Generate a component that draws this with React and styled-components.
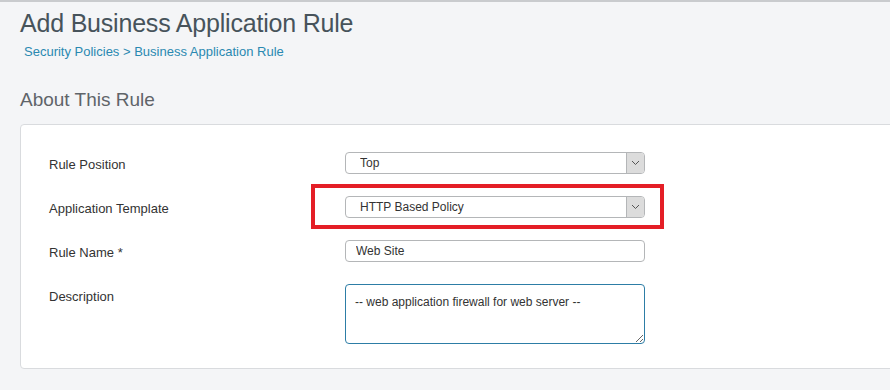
import React from "react";
import styled, { createGlobalStyle } from "styled-components";

const GlobalStyle = createGlobalStyle`
  html, body {
    margin: 0;
    padding: 0;
    background: #f4f5f7;
    overflow: hidden;
  }
  body {
    font-family: "Liberation Sans", Arial, sans-serif;
    color: #333;
  }
`;

const Page = styled.div`
  border-top: 2px solid #c9cbce;
  padding: 6px 0 0 20px;
  min-height: 390px;
  box-sizing: border-box;
`;

const Title = styled.h1`
  margin: 0;
  font-size: 25px;
  font-weight: 300;
  color: #47535b;
  line-height: 30px;
  letter-spacing: -0.2px;
`;

const Crumbs = styled.div`
  margin: 6px 0 0 4px;
  font-size: 13px;
  color: #2a89b1;
  line-height: 16px;
`;

const Section = styled.h2`
  margin: 28px 0 0;
  font-size: 19px;
  font-weight: 300;
  color: #5f6469;
  line-height: 24px;
`;

const Card = styled.div`
  margin: 12px -30px 0 0;
  background: #fff;
  border: 1px solid #d9dbde;
  border-radius: 4px;
  padding: 27px 0 24px 28px;
`;

const Row = styled.div`
  display: flex;
  align-items: flex-start;
  margin-bottom: ${(p) => p.$gap ?? 20}px;
`;

const Label = styled.div`
  width: 296px;
  padding-top: 2px;
  font-size: 13px;
  line-height: 22px;
  color: #333;
`;

const Field = styled.div`
  position: relative;
`;

const Highlight = styled.div`
  position: absolute;
  left: -34px;
  top: -12px;
  width: 345px;
  height: 37px;
  border: 4px solid #e41e26;
  pointer-events: none;
`;

const SelectBox = styled.div`
  display: flex;
  width: 300px;
  height: 22px;
  box-sizing: border-box;
  border: 1px solid #b4b6b8;
  border-radius: 4px;
  overflow: hidden;
  background: #fff;
`;

const Select = styled.select`
  flex: 1;
  appearance: none;
  border: none;
  outline: none;
  background: transparent;
  font-family: "Liberation Sans", Arial, sans-serif;
  font-size: 12px;
  color: #333;
  padding: 0 0 0 14px;
`;

const Arrow = styled.span`
  width: 17px;
  display: flex;
  align-items: center;
  justify-content: center;
  background: #dcdcdc;
  border-left: 1px solid #b4b6b8;
`;

const TextInput = styled.input`
  width: 300px;
  height: 22px;
  box-sizing: border-box;
  border: 1px solid #b4b6b8;
  border-radius: 4px;
  padding: 0 10px;
  font-family: "Liberation Sans", Arial, sans-serif;
  font-size: 12px;
  color: #333;
  outline: none;
`;

const TextArea = styled.textarea`
  display: block;
  width: 300px;
  height: 60px;
  margin: 0;
  box-sizing: border-box;
  border: 1px solid #2d7da6;
  border-radius: 4px;
  padding: 10px 9px;
  font-family: "Liberation Sans", Arial, sans-serif;
  font-size: 12px;
  color: #333;
  outline: none;
`;

const Chevron = () => (
  <svg width="9" height="6" viewBox="0 0 9 6">
    <path d="M1 1l3.5 3.5L8 1" fill="none" stroke="#555" strokeWidth="1" />
  </svg>
);

const Dropdown = ({ value }) => (
  <SelectBox>
    <Select defaultValue={value}>
      <option>{value}</option>
    </Select>
    <Arrow>
      <Chevron />
    </Arrow>
  </SelectBox>
);

export default function App() {
  return (
    <Page>
      <GlobalStyle />
      <Title>Add Business Application Rule</Title>
      <Crumbs>Security Policies &gt; Business Application Rule</Crumbs>
      <Section>About This Rule</Section>
      <Card>
        <Row>
          <Label>Rule Position</Label>
          <Dropdown value="Top" />
        </Row>
        <Row>
          <Label>Application Template</Label>
          <Field>
            <Dropdown value="HTTP Based Policy" />
            <Highlight />
          </Field>
        </Row>
        <Row>
          <Label>Rule Name *</Label>
          <TextInput defaultValue="Web Site" />
        </Row>
        <Row $gap={0}>
          <Label>Description</Label>
          <TextArea defaultValue="-- web application firewall for web server --" />
        </Row>
      </Card>
    </Page>
  );
}
